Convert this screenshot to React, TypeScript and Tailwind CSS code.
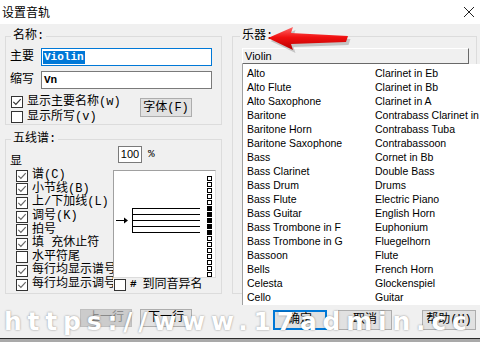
import React from 'react';

const cn = "font-['Liberation_Mono','Noto_Sans_CJK_SC',monospace]";
const sans = "font-['Liberation_Sans',Arial,sans-serif]";

const col1 = ['Alto', 'Alto Flute', 'Alto Saxophone', 'Baritone', 'Baritone Horn', 'Baritone Saxophone', 'Bass', 'Bass Clarinet', 'Bass Drum', 'Bass Flute', 'Bass Guitar', 'Bass Trombone in F', 'Bass Trombone in G', 'Bassoon', 'Bells', 'Celesta', 'Cello'];
const col2 = ['Clarinet in Eb', 'Clarinet in Bb', 'Clarinet in A', 'Contrabass Clarinet in Bb', 'Contrabass Tuba', 'Contrabassoon', 'Cornet in Bb', 'Double Bass', 'Drums', 'Electric Piano', 'English Horn', 'Euphonium', 'Fluegelhorn', 'Flute', 'French Horn', 'Glockenspiel', 'Guitar'];

const staffOpts: [string, boolean][] = [
  ['谱(C)', true],
  ['小节线(B)', true],
  ['上/下加线(L)', true],
  ['调号(K)', true],
  ['拍号', true],
  ['填 充休止符', true],
  ['水平符尾', false],
  ['每行均显示谱号', true],
  ['每行均显示调号', true],
];

const Check = ({ checked, dark }: { checked: boolean; dark?: boolean }) => (
  <span className="w-[12px] h-[12px] border border-[#333] bg-white shrink-0 flex items-center justify-center">
    {checked && (
      <svg width="10" height="10" viewBox="0 0 10 10">
        <path d="M1.3 4.8 L3.9 7.4 L8.7 2.2" stroke={dark ? '#333' : '#666'} strokeWidth="1.2" fill="none" />
      </svg>
    )}
  </span>
);

const Btn = ({ children, disabled, primary, className = '' }: { children: React.ReactNode; disabled?: boolean; primary?: boolean; className?: string }) => (
  <div
    className={`${cn} text-[12px] flex items-center justify-center ${
      disabled
        ? 'bg-[#cccccc] border border-[#bfbfbf] text-[#8a8a8a]'
        : primary
        ? 'bg-[#e1e1e1] border-2 border-[#0078d7] text-black'
        : 'bg-[#e1e1e1] border border-[#adadad] text-black'
    } ${className}`}
  >
    {children}
  </div>
);

const Preview = () => (
  <div className="h-[108px] w-[103px] bg-white border border-[#a0a0a0] border-r-[#dcdcdc] border-b-[#dcdcdc]">
    <svg width="101" height="106" viewBox="0 0 101 106">
      {[37, 43, 49, 55, 61].map(y => (
        <line key={y} x1="18" x2="86" y1={y + 0.5} y2={y + 0.5} stroke="#000" strokeWidth="1" />
      ))}
      <line x1="18.5" x2="18.5" y1="37" y2="62" stroke="#000" />
      <line x1="2" x2="12" y1="49.5" y2="49.5" stroke="#000" />
      <path d="M10 46.5 L14 49.5 L10 52.5 Z" fill="#000" />
      {Array.from({ length: 17 }).map((_, i) => {
        const filled = i >= 5 && i <= 9;
        return (
          <rect key={i} x="93.5" y={5.5 + i * 6} width="4" height="4" stroke="#000" strokeWidth="1" fill={filled ? '#000' : '#fff'} />
        );
      })}
    </svg>
  </div>
);

export default function App() {
  return (
    <div className={`w-[480px] h-[342px] relative overflow-hidden bg-[#f0f0f0] flex flex-col text-black ${cn}`}>
      {/* title bar */}
      <div className="h-[24px] bg-white flex items-center justify-between pl-[2px] pr-[5px] shrink-0">
        <span className="text-[12px] leading-none font-['Noto_Sans_CJK_SC',sans-serif]">设置音轨</span>
        <svg width="12" height="12" viewBox="0 0 12 12">
          <path d="M1 1 L11 11 M11 1 L1 11" stroke="#222" strokeWidth="1" />
        </svg>
      </div>

      <div className="flex-1 flex">
        {/* left column */}
        <div className="w-[217px] ml-[5px] flex flex-col shrink-0">
          <fieldset className="mt-[5px] border border-[#dcdcdc] p-0 m-0 min-w-0">
            <legend className="ml-[5px] px-[2px] text-[12px] leading-[14px]">名称:</legend>
            <div className="mt-[5px] flex items-center h-[18px]">
              <span className="w-[35px] pl-[4px] text-[12px]">主要</span>
              <div className="w-[171px] h-[18px] border border-[#0078d7] bg-white flex items-center pl-[1px]">
                <span className="bg-[#0078d7] text-white text-[11px] leading-[13px] font-bold px-[1px]">Violin</span>
              </div>
            </div>
            <div className="mt-[5px] flex items-center h-[18px]">
              <span className="w-[35px] pl-[4px] text-[12px]">缩写</span>
              <div className="w-[171px] h-[18px] border border-[#7a7a7a] bg-white flex items-center pl-[2px]">
                <span className="text-[11px] leading-[13px] font-bold">Vn</span>
              </div>
            </div>
            <div className="mt-[5px] flex items-center">
              <div className="w-[134px] pl-[5px] flex flex-col">
                <div className="h-[15px] flex items-center gap-[4px]">
                  <Check checked dark />
                  <span className="text-[12px] whitespace-nowrap">显示主要名称(w)</span>
                </div>
                <div className="h-[15px] flex items-center gap-[4px]">
                  <Check checked={false} />
                  <span className="text-[12px] whitespace-nowrap">显示所写(v)</span>
                </div>
              </div>
              <Btn className="w-[52px] h-[19px] -mt-[3px]">字体(F)</Btn>
            </div>
          </fieldset>

          <fieldset className="mt-[7px] border border-[#dcdcdc] p-0 m-0 pb-[2px] min-w-0">
            <legend className="ml-[5px] px-[2px] text-[12px] leading-[14px]">五线谱:</legend>
            <div className="flex">
              <div className="w-[107px] overflow-hidden pl-[4px] flex flex-col">
                <div className="mt-[9px] h-[14px] text-[12px] leading-[14px]">显</div>
                {staffOpts.map(([label, on]) => (
                  <div key={label} className="h-[13.6px] flex items-center gap-[4px] pl-[6px] whitespace-nowrap">
                    <Check checked={on} />
                    <span className="text-[12px] leading-[13px]">{label}</span>
                  </div>
                ))}
              </div>
              <div className="w-[103px] flex flex-col">
                <div className="h-[17px] flex items-center pl-[5px]">
                  <div className="w-[24px] h-[17px] border border-[#7a7a7a] bg-white flex items-center justify-center">
                    <span className={`${sans} text-[11px]`}>100</span>
                  </div>
                  <span className="ml-[6px] text-[11px]">%</span>
                </div>
                <div className="mt-[7px]">
                  <Preview />
                </div>
                <div className="h-[13px] flex items-center pl-[1px]">
                  <Check checked={false} />
                  <span className="ml-[4px] text-[11px] font-bold">#</span>
                  <span className="ml-[6px] text-[12px] whitespace-nowrap">到同音异名</span>
                </div>
              </div>
            </div>
          </fieldset>

          <div className="mt-[15px] flex pl-[75px] gap-[8px]">
            <Btn disabled className="w-[52px] h-[18px]">上一行</Btn>
            <Btn className="w-[52px] h-[18px]">下一行</Btn>
          </div>
        </div>

        {/* right column */}
        <div className="ml-[10px] w-[248px] flex flex-col shrink-0">
          <fieldset className="mt-[5px] w-[245px] h-[265px] border border-[#dcdcdc] p-0 m-0 min-w-0">
            <legend className="ml-[7px] px-[2px] text-[12px] leading-[14px]">乐器:</legend>
            <div className={`mt-[5px] ml-[9px] w-[227px] h-[16px] bg-[#f0f0f0] border border-t-white border-l-white border-r-[#696969] border-b-[#696969] flex items-center pl-[2px] ${sans} text-[11px]`}>
              Violin
            </div>
            <div className={`ml-[9px] w-[240px] h-[241px] bg-white border-l border-[#a0a0a0] pt-[2px] ${sans} text-[10.5px] relative`}>
              <div className="grid grid-flow-col grid-rows-[repeat(17,14px)] grid-cols-[128px_128px]">
                {[...col1, ...col2].map(t => (
                  <div key={t} className="pl-[4px] leading-[14px] whitespace-nowrap">{t}</div>
                ))}
              </div>
            </div>
          </fieldset>
          <div className="mt-[16px] flex ml-[41px]">
            <Btn primary className="w-[54px] h-[20px]">确定</Btn>
            <Btn className="w-[54px] h-[20px] ml-[11px]">取消</Btn>
            <Btn className="w-[54px] h-[20px] ml-[30px]">帮助(H)</Btn>
          </div>
        </div>
      </div>

      {/* bottom edge of next window */}
      <div className="h-[4px] shrink-0 border-t border-[#2b2b2b] bg-[#a9a9a9]" />

      {/* red annotation arrow */}
      <svg className="absolute left-[260px] top-[22px]" width="95" height="34" viewBox="0 0 95 34">
        <defs>
          <linearGradient id="ar" x1="0" y1="0" x2="0" y2="1">
            <stop offset="0" stopColor="#ff6a6a" />
            <stop offset="0.45" stopColor="#f01010" />
            <stop offset="1" stopColor="#b80000" />
          </linearGradient>
        </defs>
        <path d="M9 17 L34 6 L32 12 L89 15 L87 21 L32 23 L34 29 Z" fill="#000" opacity="0.18" transform="translate(1.5,2)" />
        <path d="M8 16 L33 5 L31 11 L88 14 L86 20 L31 22 L33 28 Z" fill="url(#ar)" />
      </svg>

      {/* watermark */}
      <div className="absolute left-[4px] top-[308px] text-white font-['DejaVu_Sans',sans-serif] font-bold text-[25px] leading-[28px] tracking-[5.8px] whitespace-nowrap [text-shadow:0_0_2px_rgba(0,0,0,0.45)]">
        https://www.17admin.cc
      </div>
    </div>
  );
}
